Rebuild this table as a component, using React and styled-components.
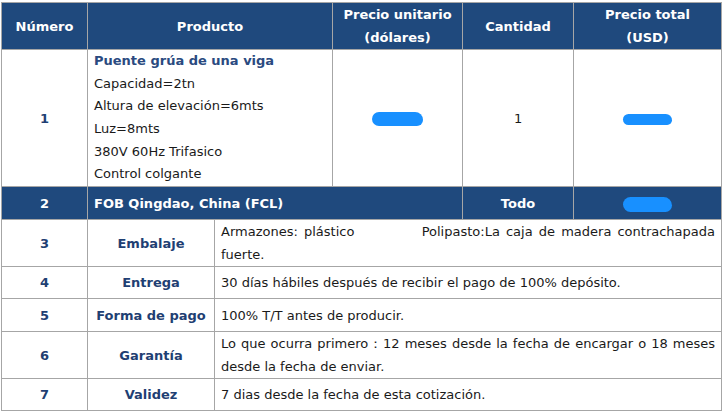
import React from "react";
import styled, { createGlobalStyle } from "styled-components";

const GlobalStyle = createGlobalStyle`
  body {
    margin: 0;
    padding: 2px 2px 2px 1px;
    background: #ffffff;
    font-family: "DejaVu Sans", Verdana, sans-serif;
  }
`;

const Table = styled.table`
  width: 720px;
  border-collapse: collapse;
  table-layout: fixed;
  font-size: 13px;
  color: #1a1a1a;
`;

const Row = styled.tr`
  height: ${(p) => p.h}px;
`;

const Th = styled.th`
  background: #1f497d;
  color: #fff;
  font-weight: bold;
  font-size: 13px;
  line-height: 23px;
  border: 1px solid #a6a6a6;
  padding: 0 4px;
  text-align: center;
  vertical-align: middle;
`;

const Td = styled.td`
  border: 1px solid #a6a6a6;
  padding: 0 ${(p) => (p.left ? 6 : 4)}px;
  line-height: ${(p) => (p.tight ? 22.6 : 23)}px;
  text-align: ${(p) => (p.left ? "justify" : "center")};
  vertical-align: middle;
  font-weight: ${(p) => (p.bold ? "bold" : "normal")};
  color: ${(p) => (p.dark ? "#fff" : p.bold ? "#1f3f73" : "#1a1a1a")};
  background: ${(p) => (p.dark ? "#1f497d" : "#fff")};
`;

const Title = styled.div`
  font-weight: bold;
  color: #2a4a80;
`;

const Blob = styled.span`
  display: inline-block;
  vertical-align: middle;
  width: ${(p) => p.w}px;
  height: ${(p) => p.hh}px;
  border-radius: 8px 9px 7px 8px;
  background: #1890ff;
`;

const specs = [
  "Capacidad=2tn",
  "Altura de elevación=6mts",
  "Luz=8mts",
  "380V 60Hz Trifasico",
  "Control colgante",
];

const terms = [
  {
    n: 3,
    k: "Embalaje",
    v: "Armazones: plástico\u00a0\u00a0\u00a0\u00a0\u00a0\u00a0\u00a0\u00a0\u00a0\u00a0 Polipasto:La caja de madera contrachapada fuerte.",
    h: 47,
  },
  { n: 4, k: "Entrega", v: "30 días hábiles después de recibir el pago de 100% depósito.", h: 32 },
  { n: 5, k: "Forma de pago", v: "100% T/T antes de producir.", h: 33 },
  {
    n: 6,
    k: "Garantía",
    v: "Lo que ocurra primero：12 meses desde la fecha de encargar o 18 meses desde la fecha de enviar.",
    h: 47,
  },
  { n: 7, k: "Validez", v: "7 dias desde la fecha de esta cotización.", h: 32 },
];

export default function App() {
  return (
    <>
      <GlobalStyle />
      <Table>
        <colgroup>
          <col style={{ width: 86 }} />
          <col style={{ width: 127 }} />
          <col style={{ width: 118 }} />
          <col style={{ width: 130 }} />
          <col style={{ width: 111 }} />
          <col style={{ width: 148 }} />
        </colgroup>
        <thead>
          <Row h={46}>
            <Th>Número</Th>
            <Th colSpan={2}>Producto</Th>
            <Th>
              Precio unitario
              <br />
              (dólares)
            </Th>
            <Th>Cantidad</Th>
            <Th>
              Precio total
              <br />
              (USD)
            </Th>
          </Row>
        </thead>
        <tbody>
          <Row h={137}>
            <Td bold>1</Td>
            <Td colSpan={2} left tight>
              <Title>Puente grúa de una viga</Title>
              {specs.map((s) => (
                <div key={s}>{s}</div>
              ))}
            </Td>
            <Td>
              <Blob w={51} hh={14} />
            </Td>
            <Td>1</Td>
            <Td>
              <Blob w={49} hh={11} />
            </Td>
          </Row>
          <Row h={33}>
            <Td dark bold>2</Td>
            <Td dark bold colSpan={3} left style={{ textAlign: "left" }}>
              FOB Qingdao, China (FCL)
            </Td>
            <Td dark bold>Todo</Td>
            <Td dark>
              <Blob w={49} hh={15} />
            </Td>
          </Row>
          {terms.map((t) => (
            <Row key={t.n} h={t.h}>
              <Td bold>{t.n}</Td>
              <Td bold>{t.k}</Td>
              <Td colSpan={4} left>{t.v}</Td>
            </Row>
          ))}
        </tbody>
      </Table>
    </>
  );
}
